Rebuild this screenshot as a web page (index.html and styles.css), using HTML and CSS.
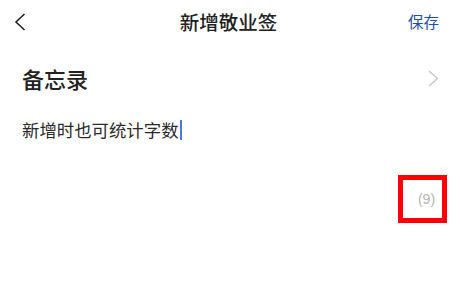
FILE: index.html
```html
<!DOCTYPE html>
<html lang="zh-CN">
<head>
  <meta charset="UTF-8">
  <title>新增敬业签</title>
  <meta name="viewport" content="width=device-width, initial-scale=1.0">
  <link rel="stylesheet" href="styles.css">
</head>
<body>

  <!-- Top bar -->
  <div class="topbar">
    <span class="back">
      <svg width="12" height="18" viewBox="0 0 12 18">
        <polyline points="10.5,1 2,9 10.5,17" fill="none" stroke="#222" stroke-width="1.6"/>
      </svg>
    </span>
    <div class="title">新增敬业签</div>
    <span class="save">保存</span>
  </div>

  <!-- Category row -->
  <div class="category">
    <span class="category-name">备忘录</span>
    <svg width="11" height="17" viewBox="0 0 11 17">
      <polyline points="1,1 9.5,8.5 1,16" fill="none" stroke="#c6c6c6" stroke-width="1.4"/>
    </svg>
  </div>

  <!-- Note text -->
  <div class="note">新增时也可统计字数<span class="caret"></span></div>

  <!-- Word count -->
  <div class="counter-row">
    <div class="counter">(9)</div>
  </div>

</body>
</html>
```

FILE: styles.css
```css
body {
  margin: 0;
  font-family: "Noto Sans CJK SC", "Noto Sans", sans-serif;
  background-color: #ffffff;
  color: #222;
}

.topbar {
  display: flex;
  align-items: center;
  justify-content: space-between;
  height: 44px;
  padding: 0 23px 0 14px;
}

.back {
  display: flex;
  width: 40px;
}

.title {
  font-size: 19.5px;
  font-weight: 500;
  color: #222;
  line-height: 1;
  margin-left: 4px;
}

.save {
  width: 40px;
  text-align: right;
  font-size: 15.5px;
  color: #1f4e9c;
  line-height: 1;
}

.category {
  display: flex;
  align-items: center;
  justify-content: space-between;
  height: 44px;
  margin-top: 12px;
  padding: 0 23px 0 22px;
}

.category-name {
  font-size: 22px;
  font-weight: 500;
  line-height: 1;
  color: #222;
}

.note {
  display: flex;
  align-items: center;
  height: 24px;
  margin-top: 18px;
  padding-left: 22px;
  font-size: 17.4px;
  line-height: 1;
  color: #2a2a2a;
}

.caret {
  display: inline-block;
  width: 2px;
  height: 20px;
  margin-left: 1px;
  background-color: #4a78e6;
}

.counter-row {
  display: flex;
  justify-content: flex-end;
  margin-top: 33px;
  padding-right: 15px;
}

.counter {
  box-sizing: border-box;
  width: 49px;
  height: 48px;
  border: 5px solid #ff0000;
  display: flex;
  align-items: center;
  justify-content: center;
  padding-left: 8px;
  font-family: "Liberation Sans", sans-serif;
  font-size: 14px;
  color: #b4b4b4;
}
```
